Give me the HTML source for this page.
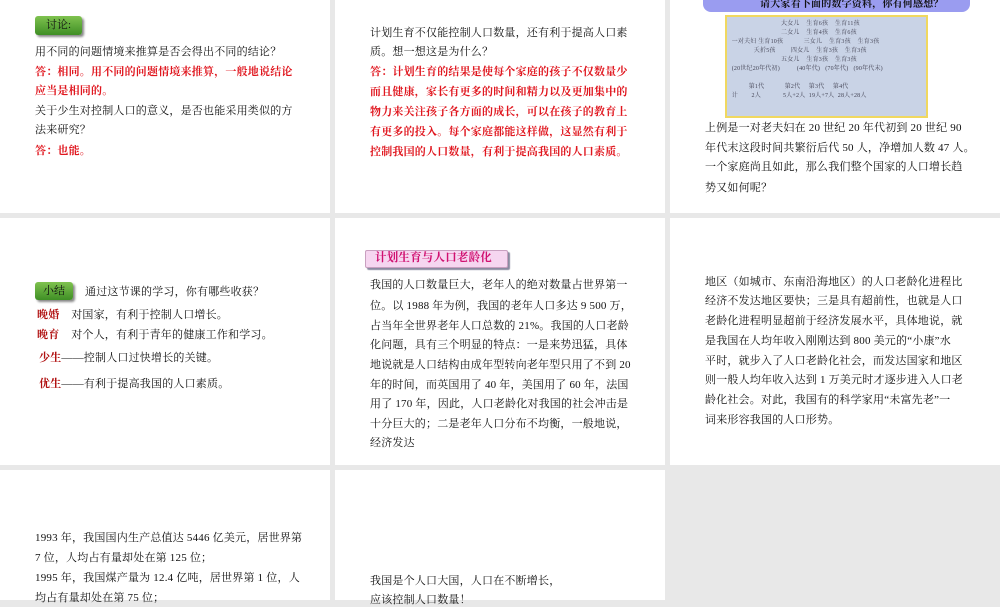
<!DOCTYPE html>
<html><head><meta charset="utf-8"><style>
body{margin:0;width:1000px;height:600px;background:#e8e8e8;position:relative;overflow:hidden;font-family:"Liberation Serif","Noto Serif CJK SC",serif;font-size:11px;color:#111}
.c{position:absolute;background:#fff}
.l{position:absolute;white-space:nowrap;line-height:14px;letter-spacing:0.2px}
.r{color:#e0161e;font-weight:bold}
.dr{color:#b01010;font-weight:bold}
.g{position:absolute;background:linear-gradient(#7fc24f,#3f8f25);border-radius:3px;box-shadow:2px 2px 2px #888;color:#111;font-size:11px;line-height:18px;text-align:center}
</style></head><body>
<div class="c" style="left:0;top:0;width:330px;height:213px"></div>
<div class="c" style="left:335px;top:0;width:330px;height:213px"></div>
<div class="c" style="left:670px;top:0;width:330px;height:213px"></div>
<div class="c" style="left:0;top:218px;width:330px;height:247px"></div>
<div class="c" style="left:335px;top:218px;width:330px;height:247px"></div>
<div class="c" style="left:670px;top:218px;width:330px;height:247px"></div>
<div class="c" style="left:0;top:470px;width:330px;height:130px"></div>
<div class="c" style="left:335px;top:470px;width:330px;height:130px"></div>

<div class="g" style="left:35px;top:16px;width:47px;height:19px">讨论:</div>
<div class="l" style="left:35px;top:45px">用不同的问题情境来推算是否会得出不同的结论？</div>
<div class="l r" style="left:35px;top:65px">答：相同。用不同的问题情境来推算，一般地说结论</div>
<div class="l r" style="left:35px;top:84px">应当是相同的。</div>
<div class="l" style="left:35px;top:104px">关于少生对控制人口的意义，是否也能采用类似的方</div>
<div class="l" style="left:35px;top:123px">法来研究？</div>
<div class="l r" style="left:35px;top:144px">答：也能。</div>

<div class="l" style="left:370px;top:26px">计划生育不仅能控制人口数量，还有利于提高人口素</div>
<div class="l" style="left:370px;top:45px">质。想一想这是为什么？</div>
<div class="l r" style="left:370px;top:65px">答：计划生育的结果是使每个家庭的孩子不仅数量少</div>
<div class="l r" style="left:370px;top:85px">而且健康，家长有更多的时间和精力以及更加集中的</div>
<div class="l r" style="left:370px;top:105px">物力来关注孩子各方面的成长，可以在孩子的教育上</div>
<div class="l r" style="left:370px;top:125px">有更多的投入。每个家庭都能这样做，这显然有利于</div>
<div class="l r" style="left:370px;top:145px">控制我国的人口数量，有利于提高我国的人口素质。</div>

<div style="position:absolute;left:703px;top:-8px;width:267px;height:20px;background:#9a9cf0;border-radius:8px"></div>
<div class="l" style="left:760px;top:-2px;font-weight:bold;font-size:10px">请大家看下面的数字资料，你有何感想？</div>
<div style="position:absolute;left:725px;top:15px;width:199px;height:99px;background:#c9d3e6;border:2px solid #f0d860"></div>
<div class="l" style="left:730px;top:20px;font-size:6px;color:#445;line-height:9px;white-space:pre">                              大女儿    生育6孩    生育11孩
                              二女儿    生育4孩    生育6孩
 一对夫妇 生育10孩            三女儿    生育3孩    生育3孩
              夭折5孩         四女儿    生育3孩    生育3孩
                              五女儿    生育3孩    生育3孩
 (20世纪20年代初)          (40年代)   (70年代)   (90年代末)

           第1代            第2代     第3代     第4代
 计        2人             5人+2人  19人+7人  28人+28人</div>
<div class="l" style="left:705px;top:121px">上例是一对老夫妇在 20 世纪 20 年代初到 20 世纪 90</div>
<div class="l" style="left:705px;top:141px">年代末这段时间共繁衍后代 50 人，净增加人数 47 人。</div>
<div class="l" style="left:705px;top:160px">一个家庭尚且如此，那么我们整个国家的人口增长趋</div>
<div class="l" style="left:705px;top:181px">势又如何呢？</div>

<div class="g" style="left:35px;top:282px;width:38px;height:18px">小结</div>
<div class="l" style="left:85px;top:285px">通过这节课的学习，你有哪些收获？</div>
<div class="l" style="left:37px;top:308px"><span class="dr">晚婚</span>&nbsp;&nbsp;&nbsp;&nbsp;对国家，有利于控制人口增长。</div>
<div class="l" style="left:37px;top:328px"><span class="dr">晚育</span>&nbsp;&nbsp;&nbsp;&nbsp;对个人，有利于青年的健康工作和学习。</div>
<div class="l" style="left:39px;top:351px"><span class="dr">少生</span>——控制人口过快增长的关键。</div>
<div class="l" style="left:39px;top:377px"><span class="dr">优生</span>——有利于提高我国的人口素质。</div>

<div style="position:absolute;left:365px;top:250px;width:141px;height:16px;background:#f6d6f0;border:1px solid #c9a0c0;border-radius:2px;box-shadow:2px 2px 1px #8a8aa0"></div>
<div class="l" style="left:375px;top:251px;color:#d01070;font-weight:bold;font-size:11.5px">计划生育与人口老龄化</div>
<div class="l" style="left:370px;top:278px">我国的人口数量巨大，老年人的绝对数量占世界第一</div>
<div class="l" style="left:370px;top:299px">位。以 1988 年为例，我国的老年人口多达 9 500 万，</div>
<div class="l" style="left:370px;top:319px">占当年全世界老年人口总数的 21%。我国的人口老龄</div>
<div class="l" style="left:370px;top:338px">化问题，具有三个明显的特点：一是来势迅猛，具体</div>
<div class="l" style="left:370px;top:358px">地说就是人口结构由成年型转向老年型只用了不到 20</div>
<div class="l" style="left:370px;top:378px">年的时间，而英国用了 40 年，美国用了 60 年，法国</div>
<div class="l" style="left:370px;top:397px">用了 170 年，因此，人口老龄化对我国的社会冲击是</div>
<div class="l" style="left:370px;top:417px">十分巨大的；二是老年人口分布不均衡，一般地说，</div>
<div class="l" style="left:370px;top:436px">经济发达</div>

<div class="l" style="left:705px;top:275px">地区（如城市、东南沿海地区）的人口老龄化进程比</div>
<div class="l" style="left:705px;top:294px">经济不发达地区要快；三是具有超前性，也就是人口</div>
<div class="l" style="left:705px;top:314px">老龄化进程明显超前于经济发展水平，具体地说，就</div>
<div class="l" style="left:705px;top:334px">是我国在人均年收入刚刚达到 800 美元的“小康”水</div>
<div class="l" style="left:705px;top:354px">平时，就步入了人口老龄化社会，而发达国家和地区</div>
<div class="l" style="left:705px;top:373px">则一般人均年收入达到 1 万美元时才逐步进入人口老</div>
<div class="l" style="left:705px;top:393px">龄化社会。对此，我国有的科学家用“未富先老”一</div>
<div class="l" style="left:705px;top:413px">词来形容我国的人口形势。</div>

<div class="l" style="left:35px;top:531px">1993 年，我国国内生产总值达 5446 亿美元，居世界第</div>
<div class="l" style="left:35px;top:551px">7 位，人均占有量却处在第 125 位；</div>
<div class="l" style="left:35px;top:571px">1995 年，我国煤产量为 12.4 亿吨，居世界第 1 位，人</div>
<div class="l" style="left:35px;top:591px">均占有量却处在第 75 位；</div>
<div class="l" style="left:370px;top:574px">我国是个人口大国，人口在不断增长，</div>
<div class="l" style="left:370px;top:593px">应该控制人口数量！</div>
</body></html>
